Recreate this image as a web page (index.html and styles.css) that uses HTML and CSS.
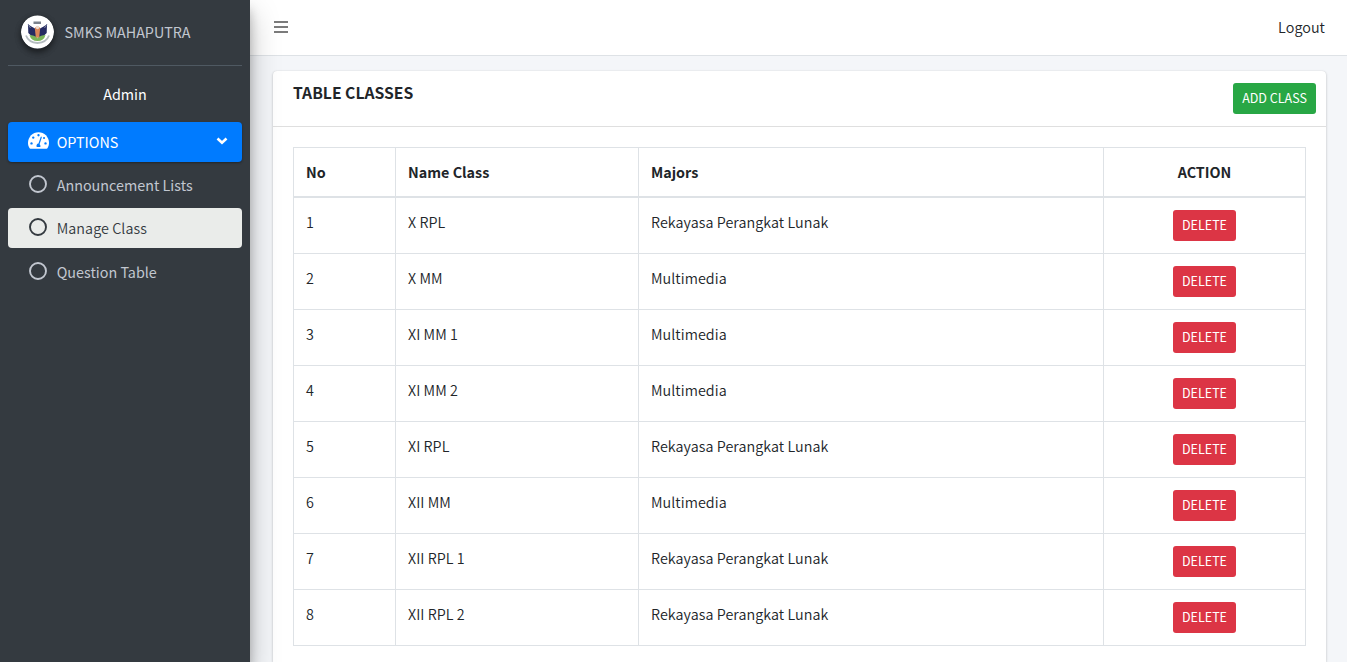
FILE: index.html
```html
<!DOCTYPE html>
<html lang="en">
<head>
<meta charset="utf-8">
<title>Table Classes</title>
<link rel="stylesheet" href="styles.css">
</head>
<body>
<div class="wrapper">
  <aside class="sidebar">
    <div class="brand">
      <svg class="brand-logo" viewBox="0 0 33 33" width="33" height="34">
        <circle cx="16.5" cy="16.5" r="16.5" fill="#fff"/>
        <path d="M12.500 6h7.500v2.500h-7.500z" fill="#7b828c"/>
        <path d="M5 20q2.500 7 11.500 7.500q9-.5 11.500-7.500" fill="none" stroke="#b5bcc0" stroke-width="1.800"/>
        <path d="M7 8.500l2.500 2 4.500 2.400h5l4.500-2.400 2.500-2-.3 9-4.500 4.300h-9.400l-4.500-4.300z" fill="#252b62"/>
        <path d="M7 8.500l2.500 4M26 8.500l-2.500 4" stroke="#8289a5" stroke-width="1"/>
        <path d="M8.500 19.500q8 1 8 3.500q0-2.500 8-3.500q-1.500 6-8 6t-8-6z" fill="#79b458"/>
        <path d="M13.800 12.500q2.700-3.500 5.400 0l-1 9.500h-3.400z" fill="#d98558"/>
        <circle cx="16.500" cy="12" r="1.700" fill="#eedacb"/>
      </svg>
      <span class="brand-text">SMKS MAHAPUTRA</span>
    </div>
    <div class="user">Admin</div>
    <nav class="menu">
      <a class="item item-open">
        <svg class="icon gauge" viewBox="0 0 576 512" width="21" height="19"><path fill="#fff" d="M288 32C129 32 0 161 0 320c0 53 14 102 39 145 6 9 16 15 27 15h444c11 0 21-6 27-15 25-43 39-92 39-145C576 161 447 32 288 32z"/><g fill="#007bff"><circle cx="288" cy="112" r="32"/><circle cx="144" cy="176" r="32"/><circle cx="96" cy="336" r="32"/><circle cx="480" cy="336" r="32"/><circle cx="440" cy="190" r="28"/><path d="M362 145c13 4 20 17 16 30l-61 184c22 18 32 47 20 73H239c-20-42 5-88 48-91l61-183c2-8 8-14 14-13z"/></g></svg>
        <span class="label">OPTIONS</span>
        <svg class="chevron" viewBox="0 0 12 8" width="12" height="8"><path d="M1.500 1.500 6 5.800l4.500-4.300" fill="none" stroke="#fff" stroke-width="2.600"/></svg>
      </a>
      <a class="item"><svg class="icon" viewBox="0 0 18 18" width="18" height="18"><circle cx="9" cy="9" r="8" fill="none" stroke="currentColor" stroke-width="1.900"/></svg><span class="label">Announcement Lists</span></a>
      <a class="item item-active"><svg class="icon" viewBox="0 0 18 18" width="18" height="18"><circle cx="9" cy="9" r="8" fill="none" stroke="currentColor" stroke-width="1.900"/></svg><span class="label">Manage Class</span></a>
      <a class="item item-last"><svg class="icon" viewBox="0 0 18 18" width="18" height="18"><circle cx="9" cy="9" r="8" fill="none" stroke="currentColor" stroke-width="1.900"/></svg><span class="label">Question Table</span></a>
    </nav>
  </aside>
  <div class="main">
    <header class="topbar">
      <svg class="bars" viewBox="0 0 14 12" width="14" height="12"><path d="M0 1h14M0 6h14M0 11h14" stroke="#7b7b7b" stroke-width="2"/></svg>
      <a class="logout">Logout</a>
    </header>
    <section class="card">
      <div class="card-header">
        <h3 class="card-title">TABLE CLASSES</h3>
        <button class="btn btn-add">ADD CLASS</button>
      </div>
      <div class="card-body">
        <table class="classes">
          <colgroup><col class="col-no"><col class="col-name"><col class="col-major"><col class="col-action"></colgroup>
          <thead><tr><th>No</th><th>Name Class</th><th>Majors</th><th class="action">ACTION</th></tr></thead>
          <tbody>
            <tr><td>1</td><td>X RPL</td><td>Rekayasa Perangkat Lunak</td><td class="action"><button class="btn btn-delete">DELETE</button></td></tr>
            <tr><td>2</td><td>X MM</td><td>Multimedia</td><td class="action"><button class="btn btn-delete">DELETE</button></td></tr>
            <tr><td>3</td><td>XI MM 1</td><td>Multimedia</td><td class="action"><button class="btn btn-delete">DELETE</button></td></tr>
            <tr><td>4</td><td>XI MM 2</td><td>Multimedia</td><td class="action"><button class="btn btn-delete">DELETE</button></td></tr>
            <tr><td>5</td><td>XI RPL</td><td>Rekayasa Perangkat Lunak</td><td class="action"><button class="btn btn-delete">DELETE</button></td></tr>
            <tr><td>6</td><td>XII MM</td><td>Multimedia</td><td class="action"><button class="btn btn-delete">DELETE</button></td></tr>
            <tr><td>7</td><td>XII RPL 1</td><td>Rekayasa Perangkat Lunak</td><td class="action"><button class="btn btn-delete">DELETE</button></td></tr>
            <tr><td>8</td><td>XII RPL 2</td><td>Rekayasa Perangkat Lunak</td><td class="action"><button class="btn btn-delete">DELETE</button></td></tr>
          </tbody>
        </table>
      </div>
    </section>
  </div>
</div>
</body>
</html>
```
FILE: styles.css
```css
* { box-sizing: border-box; }
body {
  margin: 0;
  background: #f4f6f9;
  color: #212529;
  font-family: "Noto Sans CJK JP", "Noto Sans CJK SC", sans-serif;
  font-size: 14.350px;
  line-height: 24px;
}
.wrapper { display: flex; height: 662px; }

.sidebar {
  position: relative;
  z-index: 2;
  flex: none;
  width: 250px;
  padding: 0 8px;
  background: #343a40;
  color: #c2c7d0;
  box-shadow: 0 14px 28px rgba(0, 0, 0, .25), 0 10px 10px rgba(0, 0, 0, .22);
  clip-path: inset(0 -40px 0 0);
}
.brand {
  display: flex;
  align-items: center;
  gap: 10.500px;
  height: 66px;
  padding: 0 0 2px 13px;
  border-bottom: 1px solid #4f5962;
}
.user { padding: 16px 0; text-align: center; color: #fff; }
.brand-logo {
  border-radius: 50%;
  box-shadow: 0 3px 6px rgba(0, 0, 0, .3), 0 3px 6px rgba(0, 0, 0, .3);
}
.brand-text { font-size: 14.300px; }
.menu { display: flex; flex-direction: column; gap: 3px; }
.item {
  display: flex;
  align-items: center;
  height: 40px;
  padding-left: 21px;
  border-radius: 4px;
}
.item-last { margin-top: 1px; }
.icon { flex: none; margin: 0 9.700px 2px 0; }
.gauge { margin: 0 7.700px 3px -1px; }
.item-open {
  background: #007bff;
  color: #fff;
  box-shadow: 0 1px 3px rgba(0, 0, 0, .12), 0 1px 2px rgba(0, 0, 0, .24);
}
.chevron { margin: 0 14px 2px auto; }
.item-active { background: #eaecea; color: #343a40; }
.item-active .label, .logout, .classes td { font-weight: 350; letter-spacing: .06px; }

.main {
  display: flex;
  flex: 1;
  flex-direction: column;
  min-width: 0;
}
.topbar {
  display: flex;
  flex: none;
  align-items: center;
  justify-content: space-between;
  height: 56px;
  padding: 0 22px 2px 24px;
  background: #fff;
  border-bottom: 1px solid #dee2e6;
}
.bars { margin-top: 1px; }
.card {
  flex: 1;
  min-height: 0;
  margin: 15px 21px 0 23px;
  background: #fff;
  border-radius: 4px 4px 0 0;
  box-shadow: 0 0 1px rgba(0, 0, 0, .125), 0 1px 3px rgba(0, 0, 0, .2);
}
.card-header {
  display: flex;
  justify-content: space-between;
  height: 56px;
  padding: 12px 10px 12px 20px;
  border-bottom: 1px solid rgba(0, 0, 0, .125);
}
.card-title { margin: -2px 0 0; font-size: 15.700px; font-weight: 700; line-height: 24px; }
.card-body { padding: 20px 20px 0; }
.classes {
  width: 1012px;
  table-layout: fixed;
  border-collapse: collapse;
}
.col-no { width: 102px; }
.col-name { width: 243px; }
.col-major { width: 465px; }
.col-action { width: 202px; }
.classes th, .classes td {
  padding: 12px;
  border: 1px solid #dee2e6;
  text-align: left;
  vertical-align: top;
}
.classes th { border-bottom-width: 2px; font-weight: 700; }
.classes .action { text-align: center; }
.btn {
  display: block;
  height: 31px;
  padding: 0 0 2px;
  border: 0;
  border-radius: 3px;
  color: #fff;
  font-family: inherit;
  font-size: 12.500px;
  font-weight: 400;
  line-height: 29px;
}
.btn-add { width: 83px; background: #28a745; }
.btn-delete { width: 63px; margin: 0 auto; background: #dc3545; }
```
